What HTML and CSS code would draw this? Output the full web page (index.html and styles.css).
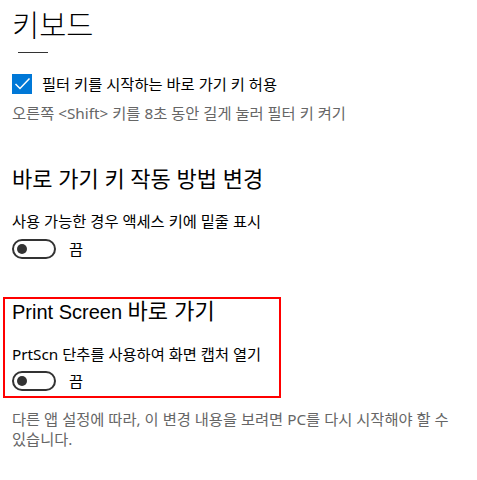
FILE: index.html
```html
<!DOCTYPE html>
<html lang="ko">
<head>
    <meta charset="UTF-8">
    <title>키보드</title>
    <link rel="stylesheet" href="styles.css">
</head>
<body>
<div class="page">
    <h1 class="page-title">키보드</h1>
    <div class="title-rule"></div>

    <div class="check-row">
        <span class="checkbox">
            <svg width="20" height="20" viewBox="0 0 20 20"><path d="M3.5 10 L8 14.5 L17.5 4.5" fill="none" stroke="#fff" stroke-width="1.5"/></svg>
        </span>
        <span class="check-label">필터 키를 시작하는 바로 가기 키 허용</span>
    </div>
    <p class="hint">오른쪽 &lt;Shift&gt; 키를 8초 동안 길게 눌러 필터 키 켜기</p>

    <h2 class="section-title">바로 가기 키 작동 방법 변경</h2>
    <p class="setting-label">사용 가능한 경우 액세스 키에 밑줄 표시</p>
    <div class="toggle-row">
        <span class="toggle"><span class="knob"></span></span>
        <span class="toggle-text">끔</span>
    </div>

    <section class="highlight">
        <h2 class="box-title">Print Screen <span class="box-title-ko">바로 가기</span></h2>
        <p class="setting-label box-label">PrtScn 단추를 사용하여 화면 캡처 열기</p>
        <div class="toggle-row box-toggle">
            <span class="toggle"><span class="knob"></span></span>
            <span class="toggle-text">끔</span>
        </div>
    </section>

    <p class="hint note">다른 앱 설정에 따라, 이 변경 내용을 보려면 PC를 다시 시작해야 할 수 있습니다.</p>
</div>
</body>
</html>
```

FILE: styles.css
```css
body {
    margin: 0;
    background-color: #fff;
    color: #000;
    font-family: "Noto Sans", "Noto Sans CJK KR", sans-serif;
    font-size: 15.3px;
    word-break: keep-all;
}
.page {
    padding-left: 12px;
    width: 455px;
}
.page-title {
    margin: 5px 0 0 0;
    font-size: 29.5px;
    font-weight: 300;
    line-height: 40px;
}
.title-rule {
    margin-top: 7px;
    margin-left: 6px;
    width: 30px;
    height: 1px;
    background-color: #333;
}
.check-row {
    display: flex;
    align-items: center;
    margin-top: 21px;
    height: 20px;
}
.checkbox {
    width: 20px;
    height: 20px;
    background-color: #0078d7;
    display: flex;
}
.check-label {
    margin-left: 10px;
    line-height: 20px;
}
.hint {
    margin: 9px 0 0 0;
    line-height: 20px;
    color: #666;
}
.section-title {
    margin: 41px 0 0 0;
    font-size: 22px;
    font-weight: 400;
    line-height: 28px;
}
.setting-label {
    margin: 19px 0 0 0;
    line-height: 20px;
}
.toggle-row {
    display: flex;
    align-items: center;
    margin-top: 8px;
    height: 20px;
}
.toggle {
    box-sizing: border-box;
    width: 44px;
    height: 20px;
    border: 2px solid #333;
    border-radius: 10px;
    display: flex;
    align-items: center;
    padding-left: 3px;
}
.knob {
    width: 10px;
    height: 10px;
    border-radius: 50%;
    background-color: #333;
}
.toggle-text {
    margin-left: 13px;
    line-height: 20px;
}
.highlight {
    box-sizing: border-box;
    width: 278px;
    margin: 38px 0 0 -9px;
    padding: 0 0 5px 7px;
    border: 2px solid #f00;
}
.box-title {
    margin: 0;
    font-family: "Liberation Sans", "Noto Sans CJK KR", sans-serif;
    font-size: 20px;
    font-weight: 400;
    line-height: 20px;
}
.box-title-ko {
    font-family: "Noto Sans CJK KR", sans-serif;
    font-size: 22px;
}
.box-label {
    margin-top: 22px;
}
.box-toggle {
    margin-top: 7px;
}
.note {
    margin-top: 11px;
}
```
